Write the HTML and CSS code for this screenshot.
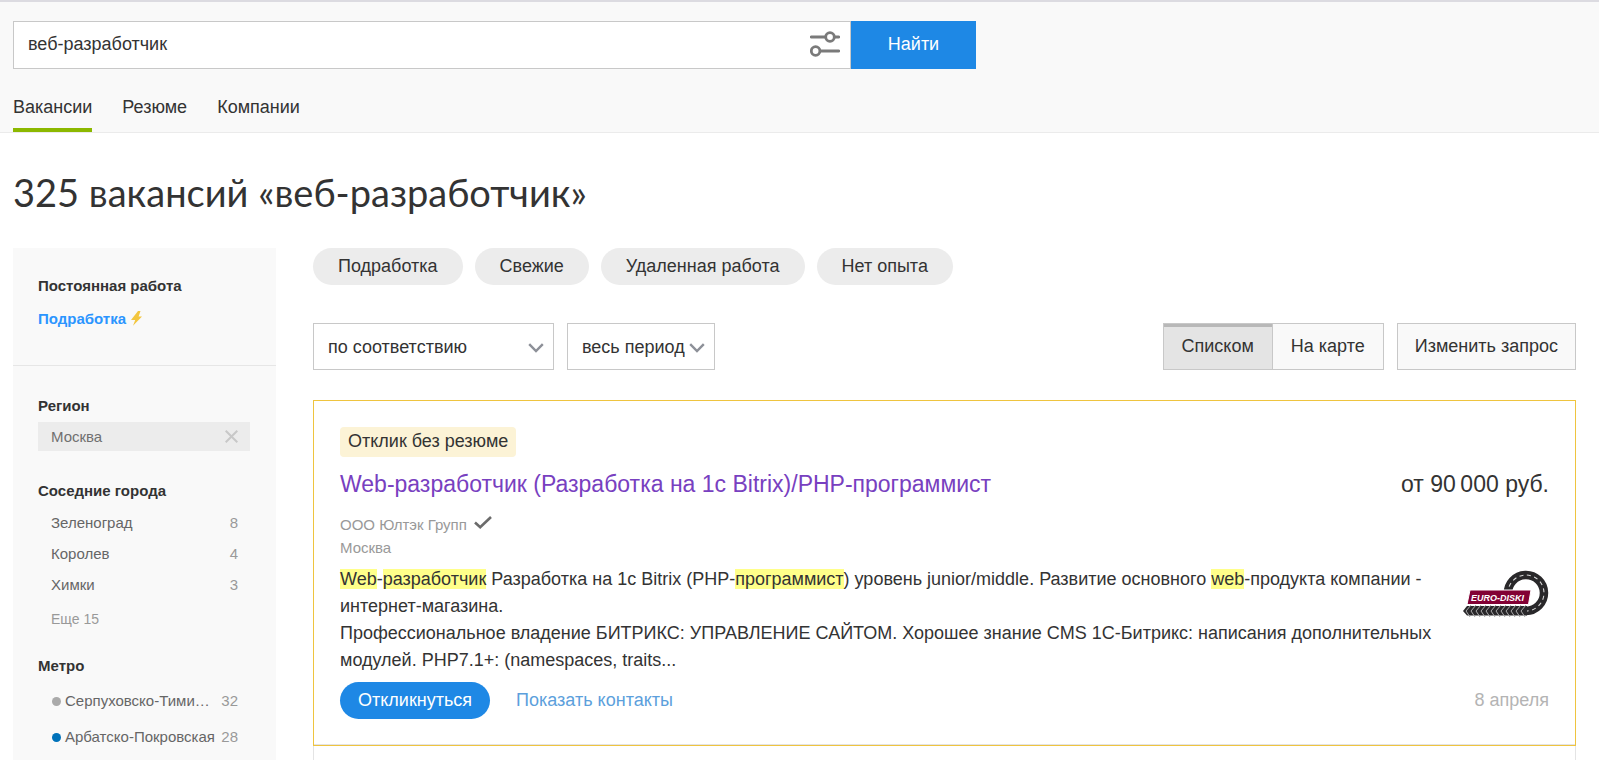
FILE: index.html
```
<!DOCTYPE html>
<html lang="ru">
<head>
<meta charset="utf-8">
<title>325 вакансий «веб-разработчик»</title>
<link rel="stylesheet" href="styles.css">
</head>
<body>
<header class="header">
  <form class="search">
    <div class="search-field">
      <input class="search-input" type="text" value="веб-разработчик" aria-label="Поиск вакансий">
      <button class="search-filters" type="button" aria-label="Фильтры">
        <svg width="30" height="26" viewBox="0 0 30 26" fill="none" stroke="#7a7a7a" stroke-width="2.8" stroke-linecap="round">
          <path d="M1.3 6H15M25 6h3.700M11 20h17.700"/>
          <circle cx="20" cy="6" r="4.300"/><circle cx="5.600" cy="20" r="4.300"/>
        </svg>
      </button>
    </div>
    <button class="search-submit" type="button">Найти</button>
  </form>
  <nav class="tabs">
    <a class="tab tab-active" href="#">Вакансии</a>
    <a class="tab" href="#">Резюме</a>
    <a class="tab" href="#">Компании</a>
  </nav>
</header>

<div class="page">
  <h1 class="page-title">325 вакансий «веб-разработчик»</h1>
  <div class="columns">
    <aside class="sidebar">
      <section class="side-types">
        <h2 class="side-title">Постоянная работа</h2>
        <a class="side-link" href="#">Подработка
          <svg width="11" height="15" viewBox="0 0 11 15"><path d="M7 0 0 9h4.200L2 14.700l9-9.200H7.600L9.500 0z" fill="#f3c63f"/></svg>
        </a>
      </section>
      <section class="side-filters">
        <h2 class="side-title">Регион</h2>
        <div class="side-chip">Москва
          <button class="side-remove" type="button" aria-label="Убрать">
            <svg width="13" height="13" viewBox="0 0 13 13" stroke="#c8c8c8" stroke-width="2"><path d="M.7.7l11.600 11.600M12.300.7.7 12.300"/></svg>
          </button>
        </div>
        <h2 class="side-title side-title-cities">Соседние города</h2>
        <ul class="side-list">
          <li><a class="side-item" href="#"><span class="side-name">Зеленоград</span><span class="side-count">8</span></a></li>
          <li><a class="side-item" href="#"><span class="side-name">Королев</span><span class="side-count">4</span></a></li>
          <li><a class="side-item" href="#"><span class="side-name">Химки</span><span class="side-count">3</span></a></li>
        </ul>
        <a class="side-more" href="#">Еще 15</a>
        <h2 class="side-title side-title-metro">Метро</h2>
        <ul class="side-list side-metro">
          <li><a class="side-item" href="#"><span class="dot dot-gray"></span><span class="side-name">Серпуховско-Тими…</span><span class="side-count">32</span></a></li>
          <li><a class="side-item" href="#"><span class="dot dot-blue"></span><span class="side-name">Арбатско-Покровская</span><span class="side-count">28</span></a></li>
        </ul>
      </section>
    </aside>

    <main class="main">
      <div class="chips">
        <button class="chip" type="button">Подработка</button>
        <button class="chip" type="button">Свежие</button>
        <button class="chip" type="button">Удаленная работа</button>
        <button class="chip" type="button">Нет опыта</button>
      </div>
      <div class="toolbar">
        <div class="select-box select-sort">
          <select class="select" aria-label="Сортировка"><option>по соответствию</option></select>
          <svg class="select-arrow" width="16" height="10" viewBox="0 0 16 10" fill="none" stroke="#8d9098" stroke-width="2.400"><path d="M1.200 1.200 8 8l6.800-6.800"/></svg>
        </div>
        <div class="select-box">
          <select class="select select-period" aria-label="Период"><option>весь период</option></select>
          <svg class="select-arrow" width="16" height="10" viewBox="0 0 16 10" fill="none" stroke="#8d9098" stroke-width="2.400"><path d="M1.200 1.200 8 8l6.800-6.800"/></svg>
        </div>
        <div class="view">
          <button class="btn btn-on" type="button">Списком</button>
          <button class="btn btn-map" type="button">На карте</button>
        </div>
        <button class="btn" type="button">Изменить запрос</button>
      </div>

      <article class="card">
        <div class="badge">Отклик без резюме</div>
        <div class="card-head">
          <h2 class="card-title"><a href="#">Web-разработчик (Разработка на 1с Bitrix)/PHP-программист</a></h2>
          <div class="salary">от 90&thinsp;000 руб.</div>
        </div>
        <div class="company">ООО Юлтэк Групп
          <svg width="18" height="13" viewBox="0 0 18 13" fill="none" stroke="#6b6b6b" stroke-width="2.600"><path d="M1 6.500 6.200 11.200 17 1"/></svg>
        </div>
        <div class="city">Москва</div>
        <div class="card-body">
          <p class="text"><mark>Web</mark>-<mark>разработчик</mark> Разработка на 1с Bitrix (PHP-<mark>программист</mark>) уровень junior/middle. Развитие основного <mark>web</mark>-продукта компании - интернет-магазина.<br>Профессиональное владение БИТРИКС: УПРАВЛЕНИЕ САЙТОМ. Хорошее знание CMS 1С-Битрикс: написания дополнительных модулей. PHP7.1+: (namespaces, traits...</p>
          <svg class="logo" width="86" height="48" viewBox="0 0 86 48">
            <path d="M45 24A18 18 0 1 1 63 41" fill="none" stroke="#29282a" stroke-width="8.500"/>
            <path d="M45 24A18 18 0 1 1 63 41" fill="none" stroke="#d8d8d8" stroke-width="1.100" stroke-dasharray="4 3.500"/>
            <path d="M4 36h60v9.500H4L0 41z" fill="#29282a"/>
            <path d="M8 35l-5 6 4 6M13 35l-5 6 4 6M18 35l-5 6 4 6M23 35l-5 6 4 6M28 35l-5 6 4 6M33 35l-5 6 4 6M38 35l-5 6 4 6M43 35l-5 6 4 6M48 35l-5 6 4 6M53 35l-5 6 4 6M58 35l-5 6 4 6M63 35l-5 6 4 6" fill="none" stroke="#aaa" stroke-width="1"/>
            <path d="M7 20h61l-2.500 14.500H4z" fill="#820034" stroke="#fff" stroke-width="1"/>
            <text class="logo-text" x="8" y="31">EURO-DISKI</text>
          </svg>
        </div>
        <div class="card-foot">
          <button class="reply" type="button">Откликнуться</button>
          <a class="contacts" href="#">Показать контакты</a>
          <time class="date">8 апреля</time>
        </div>
      </article>
      <article class="card-next"></article>
    </main>
  </div>
</div>
</body>
</html>
```
FILE: styles.css
```
* { box-sizing: border-box; }
body {
  margin: 0;
  height: 100vh;
  overflow: hidden;
  display: flex;
  flex-direction: column;
  background: #fff;
  color: #333;
  font: 18px/27px "Liberation Sans", Arial, sans-serif;
}
button, input, select { font: inherit; color: inherit; margin: 0; }
button { cursor: pointer; }
a { text-decoration: none; color: inherit; }
h1, h2, p, ul { margin: 0; padding: 0; }
ul { list-style: none; }

.header {
  padding: 19px 13px 0;
  background: #f9f9f9;
  border-top: 2px solid #dcdbe1;
  border-bottom: 1px solid #ebebeb;
}
.search { display: flex; max-width: 963px; height: 48px; }
.search-field {
  flex: 1;
  display: flex;
  align-items: center;
  padding: 0 10px 2px 14px;
  background: #fff;
  border: 1px solid #c8c8c8;
}
.search-input { flex: 1; padding: 0; border: 0; outline: 0; background: none; }
.search-filters { display: flex; padding: 0; border: 0; background: none; }
.search-submit { width: 125px; padding: 0 0 2px; border: 0; background: #1e88e5; color: #fff; }
.tabs { display: flex; gap: 30px; padding-top: 25px; }
.tab { height: 38px; }
.tab-active { border-bottom: 4px solid #8cb800; }

.page { flex: 1; min-height: 0; display: flex; flex-direction: column; padding: 0 23px 0 13px; }
.page-title { padding: 34px 0 30px; font: 400 38px/51px Lato, Roboto, sans-serif; }
.columns { flex: 1; min-height: 0; display: flex; gap: 37px; }

.sidebar { flex: 0 0 263px; min-width: 0; background: #f9f9f9; font-size: 15px; line-height: 20px; }
.side-types { height: 118px; padding: 28px 25px; border-bottom: 1px solid #e6e6e6; }
.side-title { font-size: 15px; line-height: 20px; font-weight: bold; }
.side-link { display: block; margin-top: 13px; color: #2b95ff; font-weight: bold; }
.side-link svg { margin-left: 1px; vertical-align: -2px; }
.side-filters { padding: 30px 26px 0 25px; }
.side-chip {
  display: flex;
  justify-content: space-between;
  align-items: center;
  height: 29px;
  margin-top: 6px;
  padding: 0 12px 0 13px;
  background: #ececec;
  color: #707070;
}
.side-remove { display: flex; padding: 0; border: 0; background: none; }
.side-title-cities { margin-top: 30px; }
.side-list { padding: 6px 12px 0 13px; }
.side-item { display: flex; height: 31px; align-items: center; color: #666; }
.side-name { flex: 1; white-space: nowrap; }
.side-count { margin-left: 4px; color: #999; }
.side-more { display: block; margin: 9px 13px 0; font-size: 14px; color: #999; }
.side-title-metro { margin-top: 27px; }
.side-metro { padding-top: 7px; }
.side-metro .side-item { height: 36px; }
.dot { flex: none; width: 9px; height: 9px; margin: 0 4px 0 1px; border-radius: 50%; }
.dot-gray { background: #aaa; }
.dot-blue { background: #0072ba; }

.main { flex: 1; min-width: 0; display: flex; flex-direction: column; }
.chips { display: flex; gap: 12px; }
.chip { height: 37px; padding: 0 25px 1px; border: 0; border-radius: 19px; background: #ececec; }
.toolbar { display: flex; gap: 13px; margin-top: 38px; }
.select-box { display: grid; align-items: center; height: 47px; border: 1px solid #c8c8c8; background: #fff; }
.select-sort { width: 241px; }
.select {
  grid-area: 1 / 1;
  width: 100%;
  height: 45px;
  padding: 2px 29px 0 14px;
  border: 0;
  background: none;
  appearance: none;
  outline: 0;
}
.select-arrow { grid-area: 1 / 1; justify-self: end; margin: 2px 9px 0 0; pointer-events: none; }
.view { display: flex; margin-left: auto; }
.btn { height: 47px; padding: 0 17px 1px; border: 1px solid #c8c8c8; background: #f9f9f9; }
.view .btn { padding: 0 18px 1px; }
.btn-on { background: #e4e4e4; box-shadow: inset 0 3px #b8b8b8; }
.btn-map { border-left: 0; }

.card { margin-top: 30px; padding: 26px; border: 1px solid #efc43f; box-shadow: inset 0 -1px #e4e4e4; }
.badge { width: max-content; height: 30px; padding: 1px 8px 0; border-radius: 4px; background: #fcf3d6; }
.card-head { display: flex; justify-content: space-between; margin-top: 11px; font-size: 23px; line-height: 32px; }
.card-title { font: inherit; color: #7840c0; }
.company, .city { font-size: 15px; line-height: 23px; color: #999; }
.company { margin-top: 13px; }
.company svg { margin-left: 3px; vertical-align: 1px; }
.card-body { display: flex; justify-content: space-between; margin-top: 7px; }
.text { flex: 0 1 1100px; min-width: 0; }
mark { background: #ffff8a; color: inherit; }
.logo { flex: none; margin-top: 4px; }
.logo-text { fill: #fff; font: italic bold 9px "Liberation Sans", Arial, sans-serif; }
.card-foot { display: flex; align-items: center; margin-top: 8px; }
.reply { height: 37px; padding: 0 18px 1px; border: 0; border-radius: 19px; background: #1e88e5; color: #fff; }
.contacts { margin-left: 26px; color: #5c9fdc; }
.date { margin-left: auto; color: #b4b4b4; }
.card-next { flex: 1; border: solid #e4e4e4; border-width: 0 1px; }
```
